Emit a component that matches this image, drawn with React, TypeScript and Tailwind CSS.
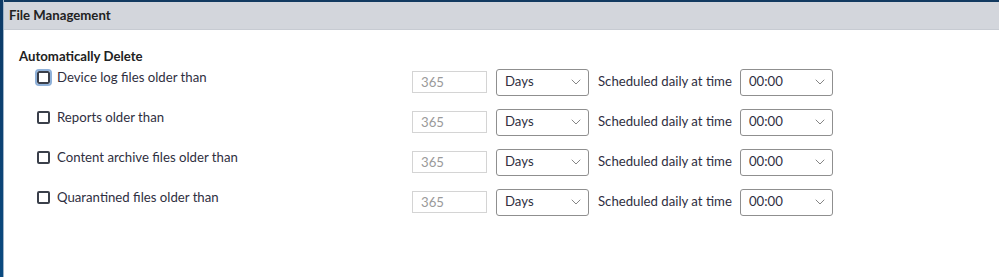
import { ChevronDown } from 'lucide-react'

const rows = [
  'Device log files older than',
  'Reports older than',
  'Content archive files older than',
  'Quarantined files older than',
]

function Row({ label, focused }: { label: string; focused?: boolean }) {
  return (
    <div className="flex items-center h-10">
      <div className="flex items-center w-[408px] pl-[33px] -mt-2">
        <span
          className={`w-[13px] h-[13px] border-2 border-[#3a3f4a] rounded-[2px] bg-white ${
            focused ? 'outline outline-2 outline-[#8fb1d9]' : ''
          }`}
        />
        <span className="ml-[7px]">{label}</span>
      </div>
      <div className="w-[75px] h-[22px] border border-[#d4d4d4] text-[#9a9a9a] pl-2 leading-[20px]">365</div>
      <div className="ml-[9px] w-[93px] h-[27px] border border-[#8f8f8f] rounded-[3px] flex items-center justify-between pl-2 pr-1">
        <span>Days</span>
        <ChevronDown className="w-[16px] h-[16px] text-[#666]" strokeWidth={1.2} />
      </div>
      <span className="ml-[9px]">Scheduled daily at time</span>
      <div className="ml-[8px] w-[93px] h-[27px] border border-[#8f8f8f] rounded-[3px] flex items-center justify-between pl-2 pr-1">
        <span>00:00</span>
        <ChevronDown className="w-[16px] h-[16px] text-[#666]" strokeWidth={1.2} />
      </div>
    </div>
  )
}

export default function App() {
  return (
    <div
      className="w-[999px] h-[277px] bg-white flex text-[13.2px] text-[#2f2f3f] overflow-hidden"
      style={{ fontFamily: 'Lato, "Open Sans", sans-serif' }}
    >
      <div className="w-[3px] bg-gradient-to-b from-[#0d3a66] to-[#0a4a80]" />
      <div className="w-px bg-[#9fb4c8]" />
      <div className="flex-1 flex flex-col">
        <div className="h-[2px] bg-[#123a60]" />
        <div className="h-[28px] bg-[#d3d6dc] border-b border-[#c7cbd2] flex items-center pl-[5px] font-bold text-[#222]">
          File Management
        </div>
        <div className="pt-[19px]">
          <div className="pl-[15px] font-bold text-[#222] h-[14px] leading-[14px]">Automatically Delete</div>
          <div className="-mt-px">
            {rows.map((r, i) => (
              <Row key={r} label={r} focused={i === 0} />
            ))}
          </div>
        </div>
      </div>
    </div>
  )
}
